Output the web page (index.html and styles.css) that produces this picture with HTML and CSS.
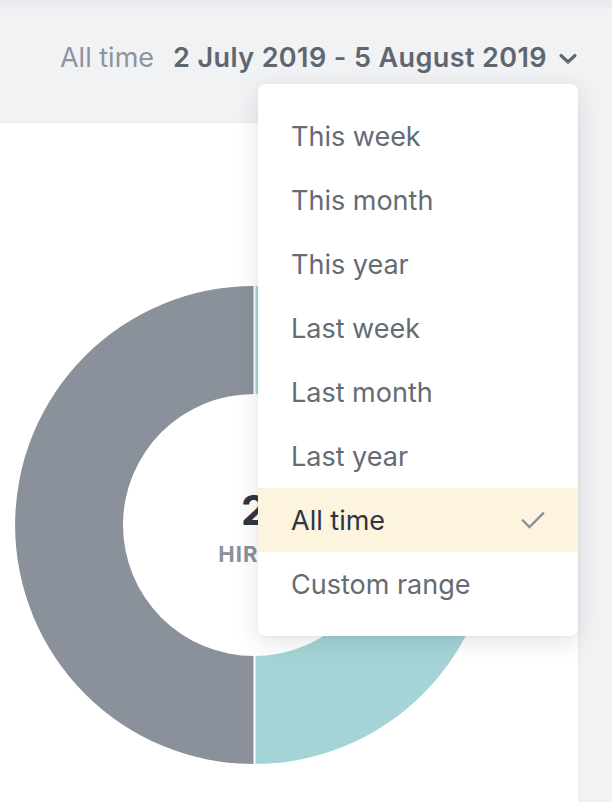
FILE: index.html
```html
<!DOCTYPE html>
<html>
<head>
<meta charset="utf-8">
<link rel="stylesheet" href="styles.css">
</head>
<body>
<div class="page">
  <header class="topbar">
    <span class="range-label">All time</span>
    <span class="range-value">2 July 2019 - 5 August 2019</span>
    <svg class="chevron" width="20" height="14" viewBox="0 0 20 14"><path d="M3 3.5 L10 10 L17 3.5" fill="none" stroke="#5f6670" stroke-width="3.2" stroke-linecap="round" stroke-linejoin="round"/></svg>
  </header>
  <main class="card">
    <div class="donut">
      <svg class="donut-svg" width="480" height="480" viewBox="0 0 480 480">
        <path d="M240 1 A239 239 0 0 0 240 479 L240 371 A131 131 0 0 1 240 109 Z" fill="#8a919b"/>
        <path d="M240 1 A239 239 0 0 1 240 479 L240 371 A131 131 0 0 0 240 109 Z" fill="#a5d4d6"/>
        <line x1="240.5" y1="0" x2="240.5" y2="112" stroke="#fff" stroke-width="2"/>
        <line x1="240.5" y1="368" x2="240.5" y2="480" stroke="#fff" stroke-width="2"/>
      </svg>
      <div class="donut-label">
        <div class="donut-num">2</div>
        <div class="donut-cap">HIRED</div>
      </div>
    </div>
  </main>
  <div class="menu">
    <div class="item">This week</div>
    <div class="item">This month</div>
    <div class="item">This year</div>
    <div class="item">Last week</div>
    <div class="item">Last month</div>
    <div class="item">Last year</div>
    <div class="item selected">All time
      <svg class="check" width="26" height="20" viewBox="0 0 26 20"><path d="M3 10.5 L9.5 17 L23 3.5" fill="none" stroke="#8a919b" stroke-width="2.4" stroke-linecap="square"/></svg>
    </div>
    <div class="item">Custom range</div>
  </div>
</div>
</body>
</html>
```
FILE: styles.css
```css
* { box-sizing: border-box; }
html, body {
  margin: 0;
  padding: 0;
  height: 100%;
}
body {
  background: #f1f2f4;
  font-family: Inter, "Noto Sans", "Liberation Sans", sans-serif;
  overflow: hidden;
}
.page {
  position: relative;
  width: 612px;
  height: 802px;
  display: flex;
  flex-direction: column;
  background: linear-gradient(to bottom, #e9eaed 0px, #f1f2f4 12px, #f1f2f4 100%);
}
.topbar {
  height: 123px;
  flex: none;
  display: flex;
  align-items: flex-start;
  justify-content: flex-end;
  padding: 41px 34px 0 0;
  white-space: nowrap;
}
.range-label {
  font-size: 27px;
  line-height: 34px;
  color: #8d949e;
  margin-right: 19px;
}
.range-value {
  font-size: 27px;
  line-height: 34px;
  font-weight: 600;
  color: #5f6670;
  letter-spacing: 0.4px;
}
.chevron {
  margin: 11px 0 0 11px;
}
.card {
  flex: 1;
  margin-right: 34px;
  background: #fff;
  box-shadow: 0 0 6px rgba(0,0,0,0.04);
  padding: 162px 0 0 14px;
}
.donut {
  display: grid;
  width: 480px;
  height: 480px;
}
.donut-svg, .donut-label {
  grid-area: 1 / 1;
}
.donut-label {
  display: flex;
  flex-direction: column;
  align-items: center;
  justify-content: center;
  padding-top: 4px;
}
.donut-num {
  font-size: 41px;
  font-weight: 700;
  color: #2e3640;
  line-height: 48px;
}
.donut-cap {
  font-size: 22px;
  font-weight: 700;
  color: #8a919b;
  letter-spacing: 1px;
  line-height: 28px;
  margin-top: 6px;
}
.menu {
  position: absolute;
  left: 258px;
  top: 84px;
  width: 320px;
  padding: 20px 0;
  background: #fff;
  border-radius: 7px;
  box-shadow: 0 6px 24px rgba(40, 45, 55, 0.13), 0 1px 3px rgba(40,45,55,0.05);
}
.item {
  height: 64px;
  display: flex;
  align-items: center;
  justify-content: space-between;
  padding: 0 32px 0 33px;
  font-size: 27px;
  color: #646b75;
}
.item.selected {
  background: #fdf4e0;
  color: #2e3540;
}
```
